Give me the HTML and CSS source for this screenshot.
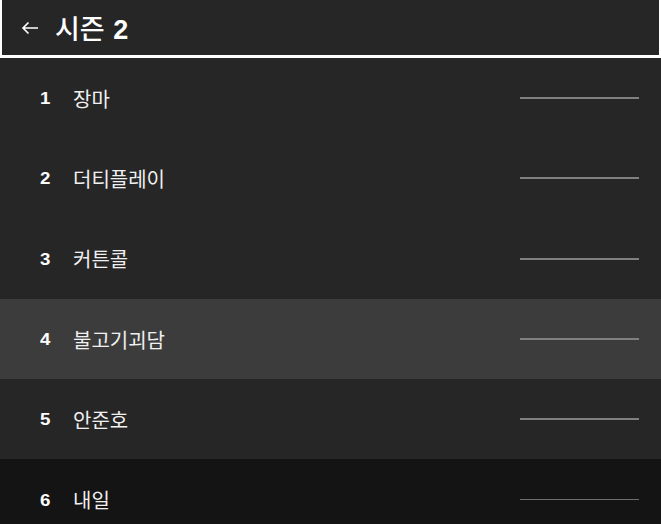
FILE: index.html
```html
<!DOCTYPE html>
<html lang="ko">
<head>
  <meta charset="UTF-8">
  <title>시즌 2</title>
  <link rel="stylesheet" href="styles.css">
</head>
<body>
  <div class="season-header">
    <svg class="back-arrow" width="18" height="14" viewBox="0 0 18 14">
      <path d="M17 7H2M7.5 1.5L2 7l5.5 5.5" fill="none" stroke="#fff" stroke-width="1.6"/>
    </svg>
    <span class="season-title">시즌 <b>2</b></span>
  </div>

  <ul class="episodes">
    <li class="episode">
      <span class="ep-num">1</span><span class="ep-title">장마</span>
      <span class="ep-progress"></span>
    </li>
    <li class="episode">
      <span class="ep-num">2</span><span class="ep-title">더티플레이</span>
      <span class="ep-progress"></span>
    </li>
    <li class="episode">
      <span class="ep-num">3</span><span class="ep-title">커튼콜</span>
      <span class="ep-progress"></span>
    </li>
    <li class="episode hover">
      <span class="ep-num">4</span><span class="ep-title">불고기괴담</span>
      <span class="ep-progress"></span>
    </li>
    <li class="episode">
      <span class="ep-num">5</span><span class="ep-title">안준호</span>
      <span class="ep-progress"></span>
    </li>
    <li class="episode dim">
      <span class="ep-num">6</span><span class="ep-title">내일</span>
      <span class="ep-progress"></span>
    </li>
  </ul>
</body>
</html>
```

FILE: styles.css
```css
body {
  margin: 0;
  background: #262626;
  color: #fff;
  font-family: "Liberation Sans", "Noto Sans CJK KR", sans-serif;
  overflow: hidden;
}

.season-header {
  height: 55px;
  display: flex;
  align-items: center;
  gap: 16px;
  padding-left: 19px;
  border: 2px solid #fff;
  border-top: none;
  border-bottom-width: 3px;
}

.back-arrow {
  display: block;
  margin-top: 1px;
}

.season-title {
  font-family: "Noto Sans CJK KR", sans-serif;
  font-size: 27px;
  font-weight: 500;
}

.season-title b {
  font-family: "Liberation Sans", sans-serif;
  font-weight: 700;
  margin-left: 1px;
}

.episodes {
  list-style: none;
  margin: 0;
  padding: 0;
}

.episode {
  height: 80.3px;
  display: flex;
  align-items: center;
  padding-left: 40px;
}

.episode.hover {
  background: #3c3c3c;
}

.episode.dim {
  background: #141414;
}

.ep-num {
  width: 33px;
  font-size: 17px;
  font-weight: 700;
  margin-top: 2px;
  transform: scaleX(1.1);
  transform-origin: left center;
}

.ep-title {
  font-family: "Noto Sans CJK KR", sans-serif;
  font-size: 20px;
  color: #f0f0f0;
}

.ep-progress {
  margin-left: auto;
  margin-right: 22px;
  width: 119px;
  height: 2px;
  background: #808080;
}

.episode.dim .ep-progress {
  height: 1px;
  background: #6e6e6e;
}
```
